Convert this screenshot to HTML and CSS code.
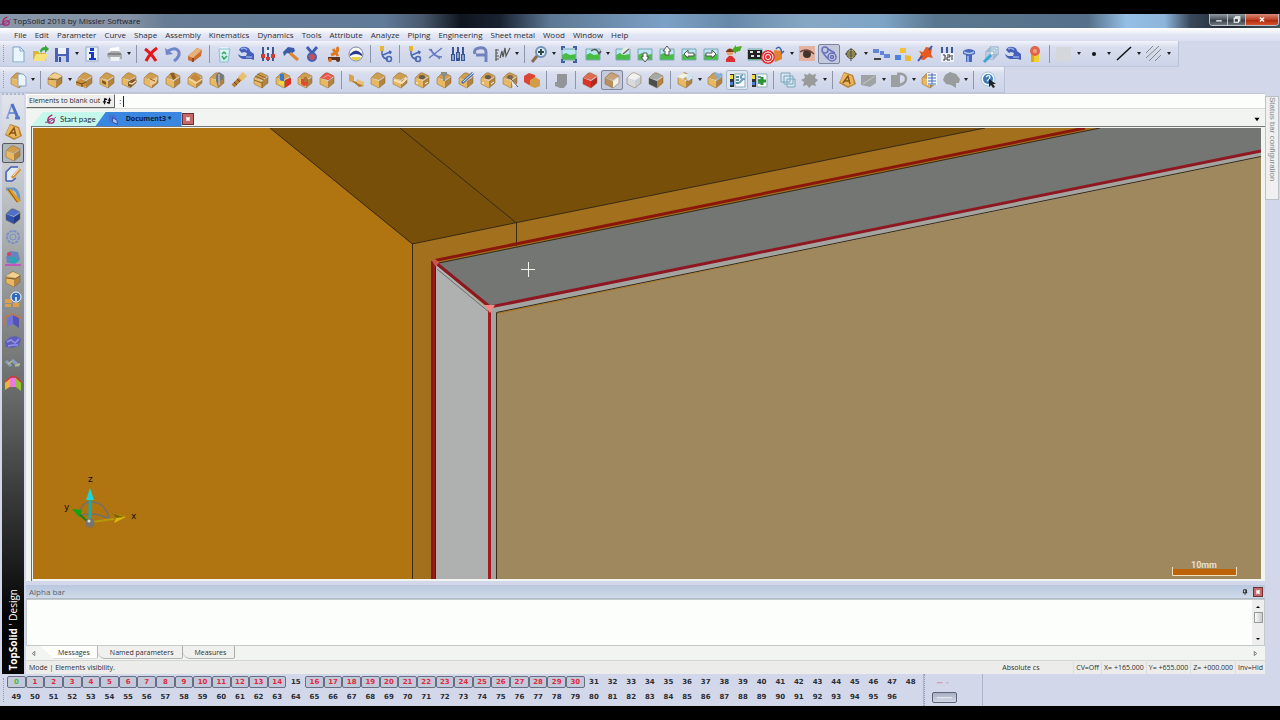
FILE: index.html
```html
<!DOCTYPE html>
<html lang="en">
<head>
<meta charset="utf-8">
<title>TopSolid 2018 by Missler Software</title>
<link rel="stylesheet" href="styles.css">
</head>
<body>
<div class="app">
  <header class="titlebar">
    <svg class="logo" viewBox="0 0 12 12"><path d="M8 1Q3 3 3 7q0 3 3 3 4 0 4-3 0-2-3-2-2 0-4 3" fill="none" stroke="#b3266d" stroke-width="1.500"/><path d="M0 9Q6 10 12 3" fill="none" stroke="#7b3c8d"/></svg>
    <h1 class="title">TopSolid 2018 by Missler Software</h1>
    <div class="winbtns">
      <button class="win" aria-label="Minimize"><svg viewBox="0 0 10 10"><path d="M1 7h8" stroke="#fff" stroke-width="2"/></svg></button>
      <button class="win" aria-label="Restore"><svg viewBox="0 0 10 10"><path d="M3 3V1h6v6H7M1 3h6v6H1z" fill="none" stroke="#fff" stroke-width="1.500"/></svg></button>
      <button class="win close" aria-label="Close"><svg viewBox="0 0 10 10"><path d="M2 2l6 6M8 2l-6 6" stroke="#fff" stroke-width="2"/></svg></button>
    </div>
  </header>
  <nav class="menu">
    <button>File</button><button>Edit</button><button>Parameter</button><button>Curve</button><button>Shape</button><button>Assembly</button><button>Kinematics</button><button>Dynamics</button><button>Tools</button><button>Attribute</button><button>Analyze</button><button>Piping</button><button>Engineering</button><button>Sheet metal</button><button>Wood</button><button>Window</button><button>Help</button>
  </nav>
  <div class="toolbar" id="standard" role="toolbar" aria-label="Standard"></div>
  <div class="toolbar" id="shape" role="toolbar" aria-label="Shape"></div>

  <div class="work">
    <aside class="rail">
      <div class="railtools" id="contexts"></div>
      <div class="brand"><b>TopSolid</b> ' Design</div>
    </aside>
    <main class="center">
      <div class="prompt">
        <button class="answer">Elements to blank out <svg viewBox="0 0 12 8"><path d="M3 8V2h3M1 5h4M9 0v6H6M7 3h4" fill="none" stroke="#111" stroke-width="1.400"/><path d="M3 0l3 2-3 2zM9 4L6 6l3 2z"/></svg></button>
        <label for="cmd">:</label>
        <input id="cmd" class="cmd" type="text">
      </div>
      <div class="tabs">
        <button class="tab start"><svg viewBox="0 0 12 12"><path d="M8 1Q3 3 3 7q0 3 3 3 4 0 4-3 0-2-3-2-2 0-4 3" fill="none" stroke="#b3266d" stroke-width="1.500"/><path d="M0 9Q6 10 12 3" fill="none" stroke="#7b3c8d"/></svg>Start page</button>
        <button class="tab doc"><svg viewBox="0 0 12 12"><path d="M1 1h6l2 3v5H1z" fill="#4d6fd0"/><path d="M5 4l5 3v4L5 9z" fill="#a9c4f4" stroke="#2c4ca5"/></svg>Document3 *</button>
        <button class="tabclose" aria-label="Close tab"><svg viewBox="0 0 10 10"><path d="M3 3l4 4M7 3l-4 4" stroke="#fff" stroke-width="2"/></svg></button>
        <button class="tablist" aria-label="Open documents"><svg viewBox="0 0 8 6"><path d="M1 1h6L4 5z"/></svg></button>
      </div>
      <div class="frame">
        <svg class="scene" viewBox="33 129 1228 451" preserveAspectRatio="xMinYMin slice" role="img" aria-label="3D view">
          <path fill="#b07410" d="M33 129h1228v451H33z"/>
          <path fill="#774f09" d="M270 129H985L412 245z"/>
          <path fill="#a3701d" d="M412 245L985 129h115L436 265v315H412z"/>
          <path fill="#737672" d="M437 264L1100 129h161v22L490 307z"/>
          <path fill="#a3a4a0" d="M490 307L1261 151v8L497 314v266H490z"/>
          <path fill="#a0885e" d="M497 315L1261 158v422H497z"/>
          <path fill="#aeb1b0" d="M436 265l54 46v269H436z"/>
          <g fill="none" stroke="#382a14" stroke-width="1">
            <path d="M270 129l142.500 116v335M412 245L517 223.500 985 129M400 129l116.500 95v23"/>
            <path d="M439 264L1100 129M1261 157.500L496.500 313.500V580M435.500 267V580"/>
          </g>
          <path d="M437 270l52 43" fill="none" stroke="#6d6d69"/>
          <path d="M435 261.500L1085 129" stroke="#8b170b" stroke-width="3" fill="none"/>
          <path d="M433 262V580" stroke="#a01a13" stroke-width="4" fill="none"/>
          <path d="M432 262V580M436 265l52 42" stroke="#6b1518" fill="none"/>
          <path d="M436 264l54 44L1261 152" stroke="#8f1722" stroke-width="3" fill="none"/>
          <path d="M489.500 308V580" stroke="#a51920" stroke-width="3" fill="none"/>
          <path d="M484 306h11l-5 8z" fill="#f08a88"/><path d="M432 262l3-2 4 3-3 5z" fill="#c95550"/>
          <path d="M521 270.500h14M528.500 263v15" stroke="#f4f4ee" fill="none"/>
          <g fill="none" stroke="#746f69" stroke-width="1.500"><path d="M80 514q1-11 11-11 15 0 18 17M82 516q13-3 25 3"/></g>
          <path d="M90 523V498" stroke="#21a9a5" stroke-width="3"/><path d="M86 501l4-12 4 12z" fill="#20d4d8"/>
          <path d="M88 523l-9-8" stroke="#17821a" stroke-width="2"/><path d="M72 510l10 1-3 7z" fill="#10a515"/>
          <path d="M92 523l22-3" stroke="#b39a07" stroke-width="2"/><path d="M112 514l14 4-12 6 2-5z" fill="#dcb60b"/><path d="M112 514l12 4-8 1z" fill="#7d6400"/>
          <circle cx="90" cy="524" r="4.500" fill="#77736f"/><circle cx="89" cy="522" r="1.500" fill="#ddd"/>
          <g class="axis"><text x="88" y="483">z</text><text x="64" y="511">y</text><text x="131" y="520">x</text></g>
          <path fill="#bd6206" d="M1173 570h63v6h-63z"/><path d="M1172.500 568v8.500h64V568" fill="none" stroke="#f0dfbd"/>
          <text class="scale" x="1191" y="569">10mm</text>
        </svg>
      </div>
      <section class="alpha">
        <div class="alphahead"><h2>Alpha bar</h2>
          <button class="pin" aria-label="Pin"><svg viewBox="0 0 8 8"><path d="M2 5V1h4v4M1 5h6M4 5v3M5 1v4" fill="none" stroke="#111"/></svg></button>
          <button class="x" aria-label="Close Alpha bar"><svg viewBox="0 0 10 10"><path d="M3 3l4 4M7 3l-4 4" stroke="#fff" stroke-width="2"/></svg></button>
        </div>
        <div class="log">
          <div class="scroll"><svg viewBox="0 0 8 6"><path d="M2 4h4L4 2z"/></svg><span class="thumb"></span><svg viewBox="0 0 8 6"><path d="M2 2h4L4 4z"/></svg></div>
        </div>
        <div class="sheets">
          <button class="step" aria-label="Previous"><svg viewBox="0 0 6 8"><path d="M4.500 1.500v5L1.500 4z" fill="#fff" stroke="#666"/></svg></button>
          <button class="sheet on">Messages</button><button class="sheet">Named parameters</button><button class="sheet">Measures</button>
          <button class="step next" aria-label="Next"><svg viewBox="0 0 6 8"><path d="M1.500 1.500v5l3-2.500z" fill="#fff" stroke="#666"/></svg></button>
        </div>
        <div class="status">
          <span class="mode">Mode | Elements visibility.</span><span class="cs">Absolute cs</span>
          <span>CV=Off</span><span>X= +165.000</span><span>Y= +655.000</span><span>Z= +000.000</span><span>Inv=Hid</span>
        </div>
      </section>
    </main>
    <aside class="side"><button>Status bar configuration</button></aside>
  </div>

  <footer class="foot">
    <div class="layers" id="layers"></div>
    <div class="lines">
      <button aria-label="Dash-dot line"><svg viewBox="0 0 24 10"><path d="M4 5h6M14 5h2" stroke="#cf8b9c"/></svg></button>
      <button class="on" aria-label="Continuous line"><svg viewBox="0 0 24 10"><path d="M4 5h16" stroke="#f1f3fb"/></svg></button>
    </div>
  </footer>
</div>
<script src="app.js"></script>
</body>
</html>
```
FILE: styles.css
```css
* { box-sizing: border-box; }
body { margin: 0; background: #000; font: 8px/12px "Open Sans", "Noto Sans", sans-serif; color: #2b2d33; }
button { font: inherit; color: inherit; margin: 0; padding: 0; border: 0; background: none; }
h1, h2 { font: inherit; margin: 0; }
svg { display: block; flex: none; }
.app { height: 100vh; padding: 14px 0; display: flex; flex-direction: column; background: linear-gradient(#000 14px, #d2d8ea 14px, #d2d8ea calc(100% - 14px), #000 calc(100% - 14px)); }
.app > * { flex: none; }

.titlebar { height: 14px; display: flex; align-items: center; gap: 2px;
  background: linear-gradient(90deg, #8796aa 0, #8592a5 10%, #667b94 13%, #607a99 30%, #48596e 33%, #10161f 36%, #182231 39%, #5d7894 43%, #7ca1c6 52%, #6789a9 57%, #86a7c4 63%, #7da4c6 69%, #5a7790 73%, #55708a 85%, #95bfe6 88%, #8db5dc 91%, #38485a 93%, #1f2832 96%, #455361 100%); }
.logo { width: 11px; height: 11px; }
.title { color: #1d232b; }
.winbtns { margin-left: auto; align-self: flex-start; display: flex; height: 12px; margin-right: 1px; border: 1px solid #b9c0c8; border-top: 0; border-radius: 0 0 4px 4px; overflow: hidden; }
.win { width: 18px; display: grid; place-items: center; background: linear-gradient(#929aa2, #4b535c 50%, #30373e 52%, #6f7881); border-right: 1px solid #b9c0c8; }
.win svg { width: 8px; height: 7px; }
.close { width: 32px; border: 0; background: linear-gradient(#d78b75, #bd4329 50%, #a82709 52%, #d8532f); }

.menu { height: 13px; padding: 1px 0 0 14px; display: flex; align-items: center; gap: 8px; background: linear-gradient(#fff, #e4e8f4 50%, #d9ddef); }

.toolbar { height: 26px; display: flex; align-items: center; align-self: flex-start; padding: 0 5px 0 7px; position: relative;
  background: linear-gradient(#f1f4fb, #d9deee 25%, #ccd4e9); border-right: 1px solid #b9c1d6; border-bottom: 1px solid #bdc6da; }
.toolbar::before, .layers::before { content: ""; position: absolute; left: 3px; top: 4px; bottom: 4px; border-left: 1px dotted #8f9ab5; }
.tool { width: 22px; height: 20px; display: grid; place-items: center; border: 1px solid transparent; border-radius: 2px; }
.tool svg { width: 18px; height: 18px; overflow: visible; }
.tool.on { border-color: #7d859c; background: #c4c9db; }
.tool.lit { border-color: #a9bad0; background: #dee6f1; }
.drop { width: 8px; height: 20px; display: grid; place-items: center; }
.drop svg { width: 4px; height: 3px; }
.sep { width: 1px; height: 18px; margin: 0 3px; background: #8d95aa; }
.gap { width: 2px; }

.app > .work { flex: 1; min-height: 0; display: flex; }
.rail { width: 22px; margin: 0 2px; background: linear-gradient(#e1e4ec, #c2c5c8 16%, #8d908f 36%, #666967 52%, #3c3e3d 68%, #050505 90%) padding-box; border-top: 2px dotted #aeb8cb; display: flex; flex-direction: column; align-items: center; justify-content: space-between; }
.railtools { padding-top: 6px; display: grid; grid-auto-rows: 21px; }
.rail .tool.on { border-color: #555a60; background: #b3b6b8; }
.brand { writing-mode: vertical-rl; transform: rotate(180deg); color: #fff; font: 10px/14px "Open Sans", sans-serif; padding-top: 3px; }
.center { flex: 1; min-width: 0; display: flex; flex-direction: column; background: #f2f4f2; }
.center > * { flex: none; }
.prompt { height: 16px; display: flex; align-items: center; background: #fcfefb; border-bottom: 1px solid #d9dcda; border-top: 1px solid #c3c8d0; }
.answer { height: 14px; padding: 0 2px; display: flex; align-items: center; gap: 2px; font: 7px/10px "Open Sans", sans-serif; background: #eeefed; border: 1px solid #fff; border-right-color: #666; border-bottom-color: #666; }
.answer svg { width: 10px; height: 8px; }
.prompt label { padding: 0 2px 0 4px; }
.cmd { flex: 1; min-width: 0; border: 0; border-left: 1px solid #222; height: 11px; background: transparent; font: inherit; outline: 0; }
.tabs { height: 17px; padding: 3px 0 0 5px; display: flex; align-items: center; }
.tab { height: 14px; display: flex; align-items: center; }
.tab svg { width: 11px; height: 11px; }
.start { background: #c6f7eb; clip-path: polygon(12px 0, 100% 0, calc(100% - 2px) 100%, 0 100%); padding: 0 8px 0 14px; gap: 4px; font: 8px/12px Lato, sans-serif; }
.doc { background: #3a87e2; color: #0c1c38; clip-path: polygon(10px 0, 100% 0, 100% 100%, 0 100%); padding: 0 10px 0 12px; gap: 7px; margin-left: -8px; font: bold 7px/12px "Open Sans", sans-serif; }
.tabclose, .x { width: 10px; height: 10px; border: 1px solid #6e2f36; background: #c36a68; display: grid; place-items: center; }
.tabclose { height: 12px; width: 12px; }
.tabclose svg, .x svg { width: 8px; height: 8px; }
.tablist { margin-left: auto; padding-right: 4px; }
.tablist svg { width: 8px; height: 5px; }
.center > .frame { flex: 1; min-height: 0; margin: 0 0 0 5px; padding: 1px 4px 2px 1px; border-top: 1px solid #747979; border-left: 1px solid #666b6b; display: flex; }
.scene { flex: 1; min-width: 0; height: 100%; }
.axis { font: 9px "DejaVu Sans", sans-serif; fill: #111; }
.scale { font: bold 9px Roboto, sans-serif; fill: #e9dfcb; }

.alpha { border-top: 4px solid #d2d8ea; }
.alphahead { height: 14px; padding: 1px 2px 0 3px; display: flex; align-items: center; background: linear-gradient(#b9c8de, #cfdaea); border-bottom: 1px solid #b1bac8; color: #59636f; font-size: 8px; }
.alphahead h2 { flex: 1; }
.pin { margin-right: 5px; }
.pin svg { width: 6px; height: 8px; }
.log { height: 47px; background: #fcfefc; border: 1px solid #c4c9c9; display: flex; justify-content: flex-end; }
.scroll { width: 12px; background: #edeeed; display: flex; flex-direction: column; align-items: center; padding: 4px 0 3px; }
.scroll svg { width: 8px; height: 6px; }
.thumb { width: 9px; height: 11px; margin: 2px 0 auto; border: 1px solid #999; background: linear-gradient(90deg, #fafafa, #c8cbcb); }
.sheets { height: 15px; display: flex; align-items: stretch; font-size: 7px; border-bottom: 1px solid #d5d7d5; }
.step { width: 14px; display: grid; place-items: center; }
.step svg { width: 5px; height: 7px; }
.next { margin-left: auto; width: 20px; }
.sheet { height: 13px; padding: 1px 8px 0 12px; background: #f0f1ee; border-right: 1px solid #a9adaa; border-bottom: 1px solid #b3b6b3; border-radius: 0 0 2px 7px; }
.sheet.on { background: #fdfefc; padding: 1px 7px 0 18px; border-bottom-color: #ddd; clip-path: polygon(0 0, 100% 0, 100% 100%, 14px 100%); }
.status { height: 13px; display: flex; align-items: center; padding-left: 3px; font-size: 7px; background: #ecedeb; white-space: nowrap; }
.status span + span { padding: 0 2px; border-left: 1px solid #ddd; }
.status .mode { flex: 1; }
.status .cs { width: 73px; border: 0; }
.side { width: 15px; padding-top: 3px; }
.side button { width: 14px; height: 104px; writing-mode: vertical-rl; text-align: left; background: #eff0ef; border: 1px solid #bcc2c8; color: #858889; font: 8px/12px "Liberation Sans", sans-serif; }

.foot { height: 32px; display: flex; font: bold 7px/12px "DejaVu Sans", sans-serif; }
.layers { flex: 1; max-width: 924px; padding-left: 7px; padding-right: 3px; display: grid; grid-template-columns: repeat(49, 1fr); grid-auto-rows: 15px; align-items: center; position: relative; border-right: 1px solid #adb5c8; }
.layer { height: 12px; border: 1px solid transparent; border-radius: 2px; line-height: 8px; }
.layer.shown { border-color: #666e82; background: #c3c9da; color: #e2293b; }
.layer.current { color: #3fbf49; }
.lines { width: 59px; padding: 1px 7px; border-right: 1px solid #adb5c8; border-left: 1px dotted #8f9ab5; display: grid; grid-template-rows: 15px 15px; align-items: center; }
.lines button { width: 25px; height: 11px; border: 1px solid transparent; border-radius: 2px; }
.lines .on { border-color: #5d6479; background: linear-gradient(#a9b0c3, #d0d6e6); }
```
FILE: app.js
```javascript
// Icon drawings, all on an 18 x 18 grid.
const box = (t = '#cf9d4e', f = '#e8b862', r = '#b28440') =>
  `<path d="M2 7l4-4q2-2 4-1l6 3-6 4z" fill="${t}"/><path d="M2 7l8 3v7l-8-4z" fill="${f}"/><path d="M10 10l6-4v6l-6 5z" fill="${r}"/><path d="M2 7l4-4q2-2 4-1l6 3v7l-6 5-8-4z" fill="none" stroke="#7c5a2a" stroke-opacity=".45"/>`;
const p = (d, fill) => `<path d="${d}" fill="${fill}"/>`;
const l = (d, c, w = 1.5) => `<path d="${d}" fill="none" stroke="${c}" stroke-width="${w}"/>`;
const pic = p('M2 4h14v11H2z', '#b9e6f2') + p('M2 10l4-2 4 2 6-1v6H2z', '#48bd43') + l('M2 4h14v11H2z', '#78a8b0', 1);
const wrench = p('M2 5q2-4 7-3 4 1 4 4l4 3v6l-3-1H6q-4-1-5-5l3 2h5l1-3-3-1-2 1z', '#4660b8') + l('M4 4q4-2 6 1M9 12h6', '#93a8e6', 1.5);
const sliders = l('M4 2v14M9 2v14M14 2v14', '#3c5794', 2);
const branch = l('M6 4v5q1 5 6 5M7 10l7-3M13 6l2 1-1 2', '#4967b2') + p('M4 1h4v5H4z', '#e6b632') + '<circle cx="13" cy="14" r="2.500" fill="none" stroke="#4967b2" stroke-width="1.500"/>';
const gearGrey = p('M8 2l3 2 4-1-1 4 3 2-3 3 1 3-4-1-3 3-2-3-4 1 1-4-3-2 4-2-1-4 4 1z', '#999b9b');
const tree = p('M2 3h4v13H2z', '#333') + p('M2 4h3v4H2z', '#f0dc3a') + p('M2 11h3v3H2z', '#4d7fd1') + p('M7 3h10v13H7z', '#f7fafa') + l('M7 3h10v13H7z', '#8badb8', 1) + l('M8 6h3M8 9h3M8 12h3', '#286d83', 1.5);

const icon = {
  new: p('M4 2h7l4 4v12H4z', '#eaf6fd') + l('M4 2h7l4 4v11H4zM11 2v4h4', '#7fa3c9', 1),
  open: p('M2 6h5l1 2h7v8H2z', '#d8b83a') + p('M5 9h12l-3 7H2z', '#f5e27d') + p('M9 6q1-4 5-4V0l4 4-4 4V5q-3 0-4 3z', '#35a83a'),
  save: p('M2 3h14v14H2z', '#4a62b8') + p('M5 3h8v6H5z', '#eef3fa') + p('M5 11h8v6H5z', '#c4cfe6') + p('M6 12h2v5H6z', '#344d91'),
  info: p('M3 2h12v14H3z', '#e9f1fa') + l('M3 2h12v14H3z', '#91a9ca', 1) + p('M7 3h4v3H7zM6 7h5v6h2v2H6v-2h2V9H6z', '#1738c0'),
  print: p('M5 3l9-1 1 6H4z', '#fff') + p('M2 9l4-3h8l3 3v5H5l-3-3z', '#a9afb0') + p('M5 12h10l-1 4H6z', '#edf4f3') + l('M3 9h13', '#777'),
  del: l('M3 4q6 4 11 12M15 3Q8 8 4 16', '#e3171a', 3),
  undo: l('M4 6q8-5 11 1 1 5-5 9', '#6f87c9', 3) + p('M1 3l8 6-7 1z', '#6f87c9'),
  erase: p('M2 11l9-8 5 2-1 6-8 6-5-2z', '#c96e34') + p('M2 11l9-8 5 2-9 8z', '#e7b178') + l('M7 13v4', '#784024'),
  recycle: p('M4 4h11l-2 13H5z', '#cfeef1') + p('M5 2h8v5H5z', '#e4f5f7') + l('M7 9l2-2 2 2M7 11l2 3 3-3', '#34a765') + l('M4 4h11l-2 13H5z', '#8abfd0', 1),
  wrench, sliders: sliders + p('M2 9h4v4H2zM12 9h4v4h-4zM7 12h4v3H7z', '#d23b32') + p('M7 5h4v3H7z', '#e9eef6'),
  hammer: p('M2 7l5-5 6 1 1 3-4 3-4-1-3 3z', '#3b5ca8') + l('M9 8l8 7', '#dd8735', 3),
  medal: l('M4 2l5 6 5-6', '#4060b1', 3) + '<circle cx="9" cy="12" r="4" fill="#c8505b" stroke="#4263b1" stroke-width="2"/>',
  robot: l('M12 2q3 5-6 8M8 4l5 7', '#e07c24', 3) + p('M3 12h12v3H3z', '#5e341f') + '<circle cx="5" cy="15" r="2" fill="#d96e20"/><circle cx="13" cy="15" r="2" fill="#5e341f"/>',
  gauge: '<circle cx="9" cy="9" r="7" fill="#f7f7ed" stroke="#8086a6"/>' + p('M3 9q6-7 12 0v2q-6-4-12 0z', '#263b91') + p('M4 13q5 5 10 0l-1-1H5z', '#e6d148'),
  branch, cross: l('M4 4q2 8 11 8M2 13L15 3M2 4l11 10', '#667bc2'),
  brushes: sliders + p('M2 9h4v7H2zM7 7h4v9H7zM12 9h4v7h-4z', '#375697') + l('M4 10v5M9 8v5M14 10v5', '#e9eefa', 1),
  hook: l('M4 9q-2-5 4-6 7-1 7 4v10M5 10h10', '#7182bd', 3),
  dims: l('M3 4v12M3 5h3M3 8h2M3 11h3M3 14h3M7 13l2-7 1 6 2-9 1 8 4-8', '#555', 1.2),
  zoom: '<circle cx="11" cy="7" r="5" fill="#d9effa" stroke="#7094b5" stroke-width="2"/>' + l('M7 11l-5 6', '#8b6c50', 3) + l('M11 4v6M8 7h6', '#344', 2),
  fit: pic + l('M2 5V2h3M13 2h3v3M16 14v3h-3M5 17H2v-3', '#4060a5', 2),
  rot: pic + l('M7 6q6-4 8 3M15 9l2-3', '#555'), pan: pic + p('M9 3l5-1 2 3-6 5-3-1z', '#e5eee4') + l('M9 9l6-5', '#666'),
  up: pic + p('M9 1l4 5h-2v4H7V6H5z', '#fff') + l('M9 1l4 5h-2v4H7V6H5z', '#555', 1), down: pic + p('M9 17l4-5h-2V8H7v4H5z', '#fff') + l('M9 17l4-5h-2V8H7v4H5z', '#555', 1),
  left: pic + p('M4 9l4-4v3h6v3H8v2z', '#fff') + l('M4 9l4-4v3h6v3H8v2z', '#555', 1), right: pic + p('M14 9l-4-4v3H4v3h6v2z', '#fff') + l('M14 9l-4-4v3H4v3h6v2z', '#555', 1),
  man: '<circle cx="6" cy="7" r="3.500" fill="#e9a276"/>' + p('M2 17v-3l3-3h3l3 3v3z', '#dd2e32') + p('M2 6q4-5 8 0v1H2z', '#85391d') + p('M8 5l4-5v2l6-1-2 5-4 1v2z', '#4dac26'),
  film: pic + p('M2 5h14v9H2z', '#222') + l('M4 7h3M11 7h3M5 11h3M11 11h3', '#d9e2da', 2),
  target: p('M6 5l8 1v8l-7 3z', '#e1832b') + l('M8 4q4-5 6 4l2-2', '#4264ad') + '<circle cx="0" cy="12" r="7" fill="#e32b30"/><g fill="none" stroke="#fff"><circle cx="0" cy="12" r="5"/><circle cx="0" cy="12" r="2.500"/></g>',
  eye: p('M1 1h16v15H1z', '#e5b2a0') + p('M2 9q6-6 14 1-7 5-14-1z', '#cdbcb6') + '<circle cx="9" cy="9" r="4" fill="#47332e"/>' + l('M2 7q7-5 14 2', '#704438'),
  rings: '<g fill="none" stroke="#6670bd" stroke-width="1.500"><circle cx="5" cy="5" r="3"/><circle cx="12" cy="12" r="4"/><circle cx="12" cy="12" r="1.500"/><path d="M8 4l7 4M3 8l5 6"/></g>',
  section: '<circle cx="9" cy="9" r="4.500" fill="#d5ca54" stroke="#555"/>' + l('M3 9h12M9 3v13M5 7h8M5 11h8', '#444', 1),
  chain: p('M1 4h6v4H1zM8 6h4v4H8zM12 9h6v4h-6z', '#6385d5') + p('M2 13h7v2H2z', '#444'),
  parts: p('M6 3h6v5H6z', '#f2c23b') + p('M1 10h6v5H1z', '#4b83dc') + p('M11 10l6 1v5h-6z', '#ecb937'),
  pushpin: p('M3 14l2-5-2-3 4 1 3-5 6 1-1 6 2 4-5-1-4 3z', '#e45a21') + l('M2 16l4-5M13 5l3-4', '#385ca9', 2),
  counter: sliders + p('M3 8h13v9H3z', '#eef1f7') + l('M5 10h2v5H5M9 10h3v2H9v3h3M14 10v5', '#333', 1),
  bolt: p('M3 6q6-4 12 0v3l-3 1v7H6v-7L3 9z', '#4867ba') + l('M4 7q5 3 10 0M8 11v6', '#abc1ef'),
  sheets: '<g fill="#e9f3fa" stroke="#87a6c0"><path d="M8 2h8v8H8zM6 4h8v8H6zM4 6h8v8H4z"/></g>' + l('M2 17l7-7', '#3fa3d3', 3),
  cert: p('M5 9h8v8H5z', '#f3cf30') + p('M5 9h3v8H5z', '#dba726') + '<circle cx="9" cy="6" r="5" fill="#df664a"/><circle cx="9" cy="6" r="2" fill="#f2a08b"/>',
  swatch: p('M1 2h15v14H1z', '#d4d8db'), dot: '<circle cx="9" cy="9" r="2" fill="#111"/>', line: l('M2 15L16 2', '#111'), hatch: l('M1 8l7-7M1 13L14 1M4 16L16 4M10 16l6-6', '#888', 1),

  boxpage: box() + p('M9 3h5l3 3v9H9z', '#e9f4fc') + l('M9 3h5l3 3v9H9z', '#8aa5c2', 1),
  boxlid: box() + p('M2 6l7-4 7 3-4 3z', '#f0cf94') + l('M2 8l9 1 5-3', '#875c24', 1),
  boxtwo: box() + p('M0 10l5-2 5 2v5l-4 1-6-2z', '#c98f3d') + l('M0 11l6 2 4-2M6 13v3', '#704919', 1),
  boxslot: box() + p('M4 9l4 2v3l-4-2z', '#825620'), boxcut: box() + p('M8 11l5-3 4 2-6 6-3-1z', '#7d5727') + l('M9 12l3 1 4-3', '#f2d9a8'),
  boxround: box() + p('M8 8l8-1-2 5-6 3z', '#edc98c') + l('M8 8l5 2', '#94631f', 1), boxnotch: box() + p('M6 2h4l2 5-3 2z', '#8c5e22'), boxfold: box() + p('M4 7l5-4 7 5-5 3z', '#c38839') + l('M3 8l7 4 6-4', '#f2d79f'),
  boxgear: box() + p('M8 4l3-3 5 3-1 4-3 2-2 6-2-6z', '#747878') + l('M11 3v11', '#d5d6d3', 1),
  drill: l('M3 15L12 6', '#b77c30', 4) + l('M10 8l5-5', '#e9bf70', 6) + l('M4 11l3 3M7 8l3 3', '#6b4619', 1), boxstack: box() + l('M3 5l9 4M5 3l9 4M10 11v6M2 9l8 3', '#8c6429', 1),
  boxcolor: box() + p('M6 3h4v8l-4-2z', '#3878c9') + p('M11 9l6-2v6l-6 4z', '#dc3427') + p('M5 10h5v5l-5-2z', '#efd63c'), boxhole: box() + p('M5 8h7v6l-4 1-3-2z', '#df4935') + p('M8 6h3v5H8z', '#af7534'),
  boxred: box('#dc4c43') + p('M3 7l5-5 7 3-4 4z', '#e8584c') + l('M5 7l5-3 3 2', '#f49a8c', 1), split: p('M2 3l5 2v7l-5-2z', '#d7a34c') + p('M5 10l7 1 5 4-5 1z', '#b27c33') + p('M10 8l7 3v4l-7-3z', '#e8bf77'),
  box: box(), boxedge: box() + l('M3 9l8 3 5-5', '#f7e2b6', 2), boxbore: box() + '<ellipse cx="9" cy="6" rx="3" ry="2" fill="#665a4a"/>' + l('M4 11v2M12 13l3-2', '#fff', 1),
  boxpin: box() + p('M6 1h6v3l-2 1v5H8V5L6 4z', '#878c8c'), boxpen: box() + l('M5 12L16 2', '#476fb5', 3) + l('M6 11L16 2', '#e7effa', 1), boxarrow: box() + '<ellipse cx="9" cy="6" rx="3" ry="2" fill="#786a50"/>' + p('M10 8l7 7-3 0-2 3z', '#e6e9eb') + l('M10 8l7 8', '#555', 1),
  boxpair: p('M1 5l5-3 6 2v8l-6 2-5-3z', '#dc4536') + p('M7 9l5-3 5 3v6l-5 2-5-2z', '#d59c47'), grey: p('M5 3h10v10l-3 4H8l-5-2v-4h2z', '#929697'),
  solid: box('#df6c51', '#df3226', '#b02a20'), shaded: box('#c7a177', '#b8905f', '#f1efe9'), wire: box('#f1f1ee', '#d8dadd', '#c8ccce'), dark: box('#a7aaa1', '#4b4f4b', '#b7823d'),
  boxdoc: box() + p('M8 3l7-1 2 5-5 3z', '#cfe4f1') + p('M1 6l6-4 5 2-5 4z', '#f3f1e3'), boxwrench: box() + l('M9 2q2 4 7 1l-5 5', '#87b0d2', 3), tree: tree + l('M11 12l4-4M15 4q-4 1-1 4l3 0', '#6f9fc6', 2), treeadd: tree + l('M12 6v8M8 10h8', '#2e942f', 3),
  copies: '<g fill="#d5e6f0" stroke="#7da6bd"><path d="M2 2h9v9H2zM5 5h9v8H5zM8 8h8v8H8z"/></g>', gearGrey,
  plate: p('M6 1l9 3 3 9-8 4-9-5z', '#b98338') + p('M6 2l8 3 2 8-6 2-8-4z', '#eab85f') + l('M5 12l5-7 2 8M7 10h5', '#8a5717'), greybox: p('M1 4h15v8l-6 4-9-2z', '#a0a3a3') + l('M3 13L15 5', '#c4c8cd', 1),
  greyturn: p('M1 4h9v12H1z', '#9c9f9f') + l('M7 3q9-1 9 5 0 4-6 6', '#999d9f', 2.5), boxlist: box() + p('M7 2h10v12H7z', '#f1f5fb') + l('M8 4h8M8 7h8M8 10h8M8 13h8M12 2v11', '#426eb5', 1), blob: p('M3 4l5-3 6 2 4 5-1 4h-3v5l-5-3-5-1-3-4z', '#999c9c'),
  help: '<circle cx="9" cy="8" r="7" fill="#f3f8fc" stroke="#9fc3dd"/><circle cx="9" cy="8" r="5" fill="#3e78b5"/>' + l('M7 6q3-3 4 0 0 2-3 4', '#e3f2ff') + p('M10 8v8l2-2 2 3 2-1-2-3h3z', '#222'),

  letter: l('M3 16L8 2M2 16h3', '#7f9bdc', 1.5) + l('M8 2l6 14M11 16h5', '#4f72c4', 3) + l('M5 11h7', '#5a7ccc', 1.5),
  sketch: p('M3 16V7l5-5 8 1-8 12z', '#e4e8ef') + l('M2 16V7l5-5h7M2 16h6l4-3', '#4362b4') + l('M8 13l8-9', '#d5903c', 3) + l('M9 11l6-7', '#fff1cd', 1),
  measure: l('M2 3h8q5 2 5 12', '#6898c6', 3) + l('M5 4l10 12', '#e29b24', 4) + l('M4 3l9 13', '#835214', 1),
  bluebox: box('#4e6fcc', '#3153ae', '#213c8a'), gear: '<g fill="none" stroke="#7890c9"><circle cx="9" cy="9" r="6" stroke-width="2" stroke-dasharray="3 1"/><circle cx="9" cy="9" r="3"/></g>',
  car: p('M2 8l4-6 8 1 2 7-5 5-8-1z', '#6785bd') + '<circle cx="5" cy="5" r="2" fill="#d84163"/><circle cx="9" cy="11" r="3" fill="#27a5b5"/>' + l('M10 13l5-2', '#27a5b5', 2) + l('M1 16h16', '#cb3fc7'),
  ask: p('M1 8h7v4H1zM1 13h6v3H1zM9 12h6v4H9z', '#dba04c') + '<circle cx="12" cy="6" r="5" fill="#2f6abd" stroke="#fff"/>' + l('M12 3v1M12 6v4', '#fff'),
  surf: p('M3 6l6-3v9l-6 3z', '#7172d7') + p('M9 3l6 3v10l-6-4z', '#5354b6') + l('M1 14V5l8-3 8 4', '#bd7652'), mesh: p('M1 9l5-5 6-1 5 3-2 7-7 2-6-1z', '#5d5ebb') + l('M3 9l4-2 4 3 4-4M4 13l5-1 5 0', '#9293ea', 1.5),
  bolts: l('M2 7l5 5M8 6l7 6', '#86a0c7', 3) + l('M4 10l4-3M11 12l5-2', '#c4bd76'), fan: p('M1 15V6l6-4v9z', '#efb42c') + p('M6 3l6-1v10H6z', '#eb78df') + p('M12 2l5 5v9l-5-4z', '#91c532') + l('M1 7l6-5h5l5 5', '#ce383b')
};

// "v" is a drop arrow, "|" a separator, "_" a small gap; a leading "*" marks a pressed tool and "+" a highlighted one.
const standard = 'new open save v info print v | del undo erase | recycle wrench sliders hammer medal robot gauge | branch | branch cross brushes hook dims v | zoom v fit _ rot v pan down up left right man film target v eye *rings section v chain parts pushpin counter bolt sheets wrench cert | swatch v dot v line v hatch v';
const shape = 'boxpage v | boxlid v boxtwo boxslot boxcut boxround boxnotch boxfold boxgear drill boxstack boxcolor boxhole boxred | split box boxedge boxbore boxpin boxpen boxbore boxarrow boxpair | grey | solid *shaded wire dark | boxdoc v boxwrench +tree treeadd | copies gearGrey v | plate greybox v greyturn v boxlist blob v | help';
const contexts = 'letter plate *box sketch measure bluebox gear car boxlid ask surf mesh bolts fan';

function tools(list) {
  return list.split(' ').map(t => {
    if (t === '|') return '<span class="sep"></span>';
    if (t === '_') return '<span class="gap"></span>';
    if (t === 'v') return '<button class="drop" aria-label="More"><svg viewBox="0 0 4 3"><path d="M0 0h4L2 3z" fill="#222"/></svg></button>';
    const state = t[0] === '*' ? ' on' : t[0] === '+' ? ' lit' : '';
    const name = t.replace(/^[*+]/, '');
    return `<button class="tool${state}" aria-label="${name}"><svg viewBox="0 0 18 18">${icon[name]}</svg></button>`;
  }).join('');
}
document.getElementById('standard').innerHTML = tools(standard);
document.getElementById('shape').innerHTML = tools(shape);
document.getElementById('contexts').innerHTML = tools(contexts);

let cells = '';
for (let n = 0; n <= 96; n++) {
  const shown = n <= 30 && n !== 15;
  cells += `<button class="layer${shown ? ' shown' : ''}${n === 0 ? ' current' : ''}">${n}</button>`;
}
document.getElementById('layers').innerHTML = cells;
```
